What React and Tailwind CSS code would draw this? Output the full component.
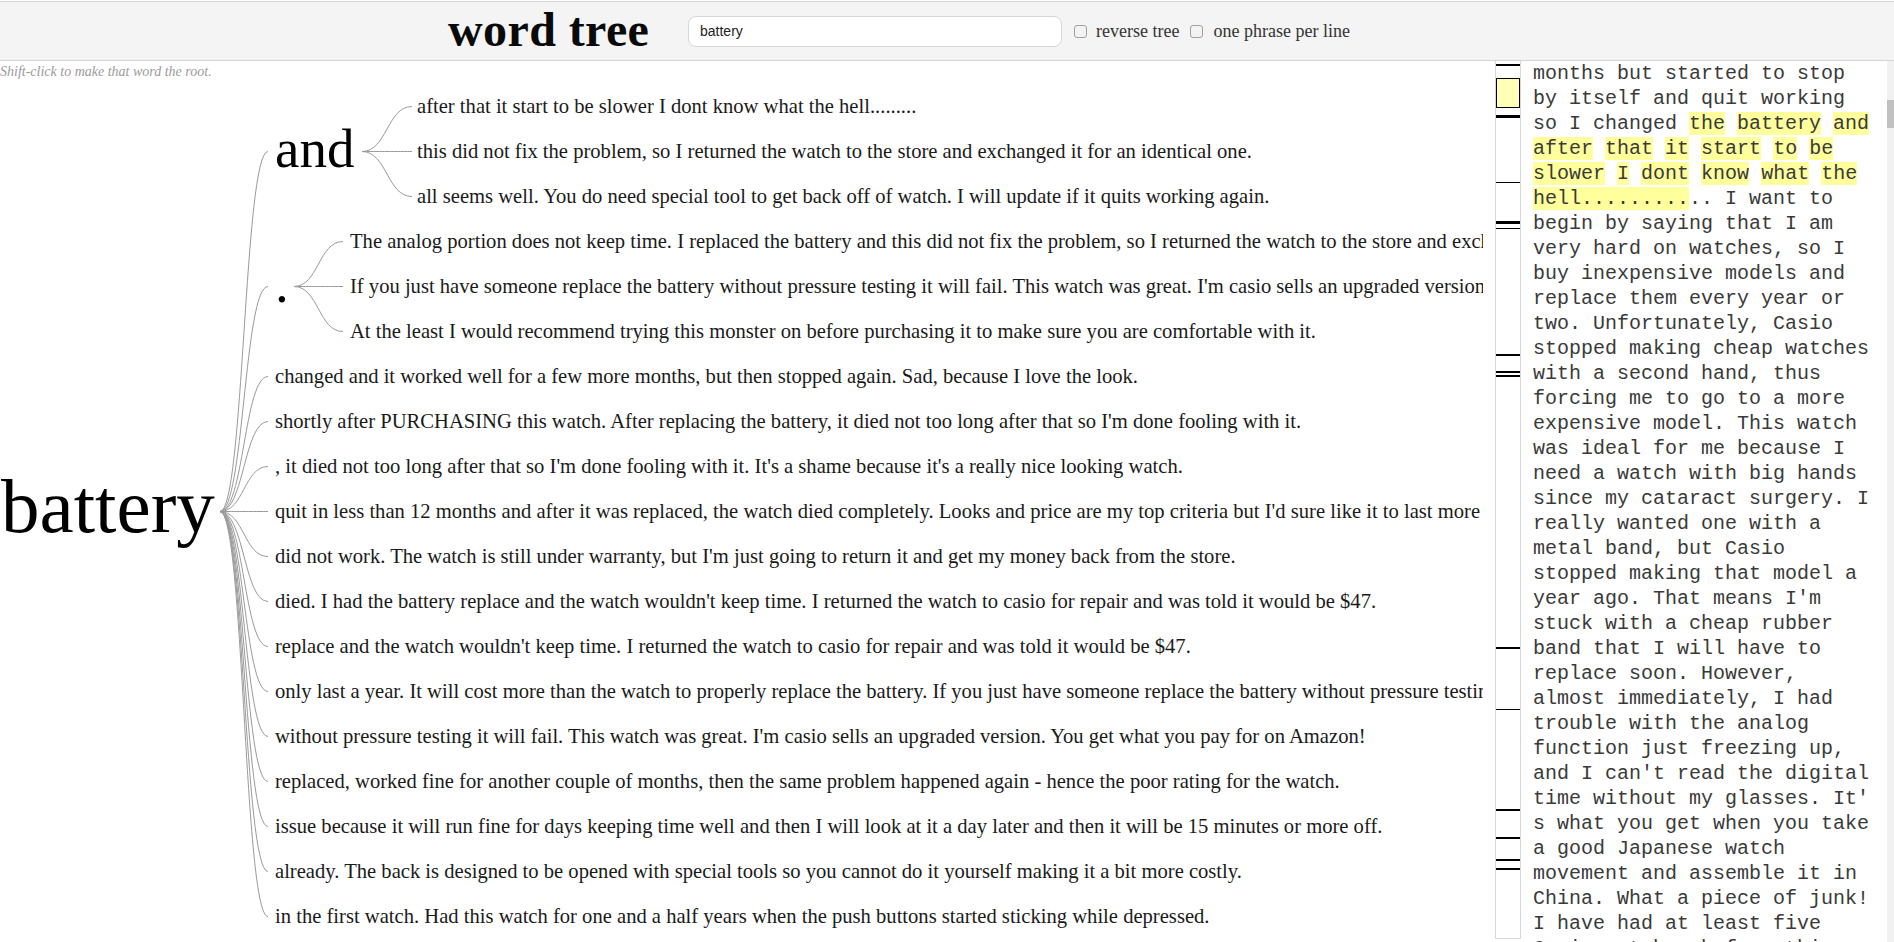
import React from "react";

const andKids = [
  "after that it start to be slower I dont know what the hell.........",
  "this did not fix the problem, so I returned the watch to the store and exchanged it for an identical one.",
  "all seems well. You do need special tool to get back off of watch. I will update if it quits working again.",
];

const dotKids = [
  "The analog portion does not keep time. I replaced the battery and this did not fix the problem, so I returned the watch to the store and exchanged it for an identical one.",
  "If you just have someone replace the battery without pressure testing it will fail. This watch was great. I'm casio sells an upgraded version. You get what you pay for on Amazon!",
  "At the least I would recommend trying this monster on before purchasing it to make sure you are comfortable with it.",
];

const rootLeaves = [
  "changed and it worked well for a few more months, but then stopped again. Sad, because I love the look.",
  "shortly after PURCHASING this watch. After replacing the battery, it died not too long after that so I'm done fooling with it.",
  ", it died not too long after that so I'm done fooling with it. It's a shame because it's a really nice looking watch.",
  "quit in less than 12 months and after it was replaced, the watch died completely. Looks and price are my top criteria but I'd sure like it to last more than a year.",
  "did not work. The watch is still under warranty, but I'm just going to return it and get my money back from the store.",
  "died. I had the battery replace and the watch wouldn't keep time. I returned the watch to casio for repair and was told it would be $47.",
  "replace and the watch wouldn't keep time. I returned the watch to casio for repair and was told it would be $47.",
  "only last a year. It will cost more than the watch to properly replace the battery. If you just have someone replace the battery without pressure testing it will fail.",
  "without pressure testing it will fail. This watch was great. I'm casio sells an upgraded version. You get what you pay for on Amazon!",
  "replaced, worked fine for another couple of months, then the same problem happened again - hence the poor rating for the watch.",
  "issue because it will run fine for days keeping time well and then I will look at it a day later and then it will be 15 minutes or more off.",
  "already. The back is designed to be opened with special tools so you cannot do it yourself making it a bit more costly.",
  "in the first watch. Had this watch for one and a half years when the push buttons started sticking while depressed.",
];

const sourceLines = [
  "months but started to stop",
  "by itself and quit working",
  "so I changed [the] [battery] [and]",
  "[after] [that] [it] [start] [to] [be]",
  "[slower] [I] [dont] [know] [what] [the]",
  "[hell.........].. I want to",
  "begin by saying that I am",
  "very hard on watches, so I",
  "buy inexpensive models and",
  "replace them every year or",
  "two. Unfortunately, Casio",
  "stopped making cheap watches",
  "with a second hand, thus",
  "forcing me to go to a more",
  "expensive model. This watch",
  "was ideal for me because I",
  "need a watch with big hands",
  "since my cataract surgery. I",
  "really wanted one with a",
  "metal band, but Casio",
  "stopped making that model a",
  "year ago. That means I'm",
  "stuck with a cheap rubber",
  "band that I will have to",
  "replace soon. However,",
  "almost immediately, I had",
  "trouble with the analog",
  "function just freezing up,",
  "and I can't read the digital",
  "time without my glasses. It'",
  "s what you get when you take",
  "a good Japanese watch",
  "movement and assemble it in",
  "China. What a piece of junk!",
  "I have had at least five",
  "Casio watches before this",
];

const marks = [
  { y: 64, h: 2 },
  { y: 115, h: 3 },
  { y: 182, h: 1 },
  { y: 221, h: 3 },
  { y: 228, h: 1 },
  { y: 354, h: 2 },
  { y: 371, h: 2 },
  { y: 375, h: 2 },
  { y: 647, h: 2 },
  { y: 709, h: 1 },
  { y: 809, h: 2 },
  { y: 837, h: 2 },
  { y: 859, h: 2 },
  { y: 868, h: 2 },
];

function Links({ w, h, y0, ys }) {
  const m = w / 2;
  return (
    <svg width={w} height={h} className="shrink-0 block" viewBox={`0 0 ${w} ${h}`}>
      {ys.map((y, i) => (
        <path
          key={i}
          d={`M0,${y0}C${m},${y0} ${m},${y} ${w},${y}`}
          fill="none"
          stroke="#9a9a9a"
          strokeWidth="1"
        />
      ))}
    </svg>
  );
}

function Leaf({ text, pad }) {
  return (
    <div
      className={
        pad
          ? "h-[45px] flex items-center pl-[5px] whitespace-nowrap text-[20.6px] leading-none text-[#1a1a1a]"
          : "h-[45px] flex items-center pl-[7px] whitespace-nowrap text-[20.6px] leading-none text-[#1a1a1a]"
      }
    >
      {text}
    </div>
  );
}

function Line({ text }) {
  const parts = text.split(/(\[[^\]]+\])/).filter((p) => p.length);
  return (
    <div className="h-[25px] whitespace-pre">
      {parts.map((p, i) =>
        p.startsWith("[") ? (
          <span key={i} className="bg-[#ffff9c]">
            {p.slice(1, -1)}
          </span>
        ) : (
          <span key={i}>{p}</span>
        )
      )}
    </div>
  );
}

export default function App() {
  const rootYs = [67.5, 202.5, ...rootLeaves.map((_, i) => 45 * (i + 6) + 22.5)];
  return (
    <div className="w-[1894px] h-[942px] overflow-hidden bg-white font-['Liberation_Serif',serif] text-black">
      {/* header */}
      <div className="mt-[1px] h-[60px] border-t border-b border-[#d4d4d4] bg-[#f4f4f4] flex items-center pl-[448px]">
        <div className="text-[48px] font-bold leading-none tracking-[0.4px] text-[#0a0a0a] w-[240px] -mt-[2px]">
          word tree
        </div>
        <div className="w-[374px] h-[31px] rounded-[8px] border border-[#d6d6d6] bg-white flex items-center pl-[11px] font-['Liberation_Sans',sans-serif] text-[14px] text-[#222]">
          battery
        </div>
        <div className="ml-[12px] w-[13px] h-[13px] rounded-[3px] border border-[#a0a0a0] bg-[#f3f3f3]" />
        <div className="ml-[9px] text-[18px] text-[#333] leading-none">reverse tree</div>
        <div className="ml-[11px] w-[13px] h-[13px] rounded-[3px] border border-[#a0a0a0] bg-[#f3f3f3]" />
        <div className="ml-[10px] text-[18px] text-[#333] leading-none">one phrase per line</div>
      </div>

      {/* main */}
      <div className="flex h-[881px]">
        {/* tree panel */}
        <div className="w-[1483px] shrink-0 overflow-hidden">
          <div className="h-[23px] leading-[22px] text-[14px] italic text-[#9b9b9b] whitespace-nowrap">
            Shift-click to make that word the root.
          </div>
          <div className="flex items-center h-[855px]">
            <div className="w-[220px] shrink-0 text-[77px] leading-none -mt-[10px] pl-[1px] text-black">
              battery
            </div>
            <Links w={48} h={855} y0={427.5} ys={rootYs} />
            <div className="flex flex-col">
              <div className="h-[135px] flex items-center pl-[7px]">
                <div className="w-[87px] shrink-0 text-[55px] leading-none -mt-[7px]">and</div>
                <Links w={50} h={135} y0={67.5} ys={[22.5, 67.5, 112.5]} />
                <div className="flex flex-col">
                  {andKids.map((t, i) => (
                    <Leaf key={i} text={t} pad />
                  ))}
                </div>
              </div>
              <div className="h-[135px] flex items-center pl-[7px]">
                <div className="w-[19px] shrink-0 text-[55px] leading-none -mt-[7px]">.</div>
                <Links w={49} h={135} y0={67.5} ys={[22.5, 67.5, 112.5]} />
                <div className="flex flex-col">
                  {dotKids.map((t, i) => (
                    <Leaf key={i} text={t} />
                  ))}
                </div>
              </div>
              {rootLeaves.map((t, i) => (
                <Leaf key={i} text={t} />
              ))}
            </div>
          </div>
        </div>

        {/* gap */}
        <div className="w-[12px] shrink-0" />

        {/* minimap */}
        <div className="relative w-[26px] shrink-0 h-[878px] border-l border-r border-b border-[#d9d9d9] bg-white">
          <div className="absolute left-0 right-0 top-[17px] h-[30px] border border-black bg-[#ffffb8]" />
          {marks.map((m, i) => (
            <div
              key={i}
              className="absolute left-0 right-0 bg-black"
              style={{ top: m.y - 61, height: m.h }}
            />
          ))}
        </div>

        {/* source text */}
        <div className="flex-1 overflow-hidden pl-[12px] font-['Liberation_Mono',monospace] text-[20px] leading-[25px] text-[#3a3a3a]">
          {sourceLines.map((l, i) => (
            <Line key={i} text={l} />
          ))}
        </div>

        {/* scrollbar */}
        <div className="w-[7px] shrink-0 bg-[#f1f1f1] pt-[39px]">
          <div className="h-[28px] bg-[#c1c1c1]" />
        </div>
      </div>
    </div>
  );
}
